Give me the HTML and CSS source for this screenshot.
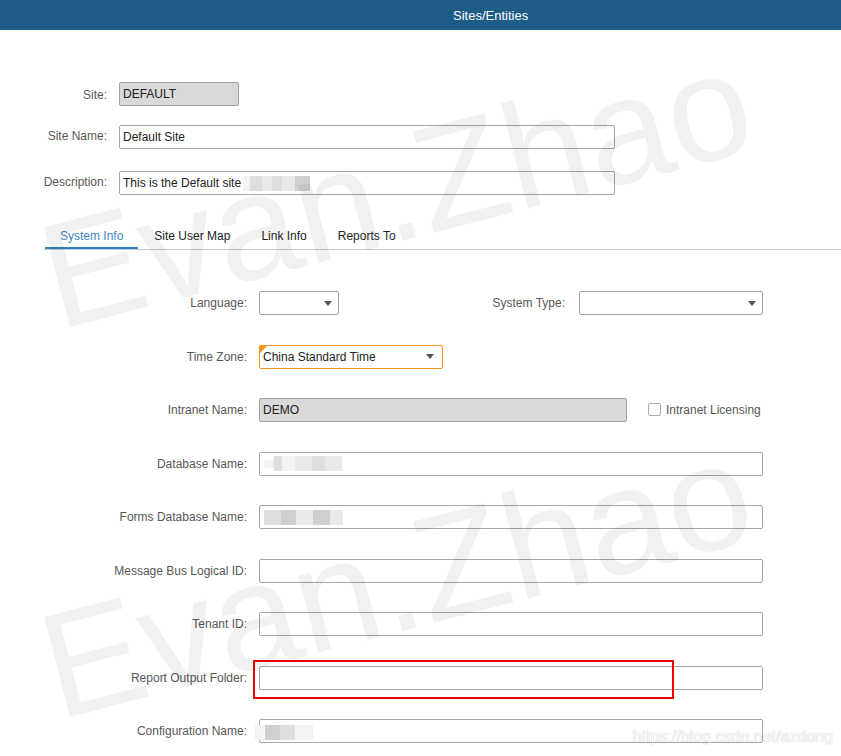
FILE: index.html
```html
<!DOCTYPE html>
<html>
<head>
<meta charset="utf-8">
<title>Sites/Entities</title>
<link rel="stylesheet" href="styles.css">
</head>
<body>
<header class="topbar"><span class="title">Sites/Entities</span></header>

<section class="site-form">
  <div class="row first">
    <span class="lbl">Site:</span>
    <div class="field ro w-site">DEFAULT</div>
  </div>
  <div class="row">
    <span class="lbl">Site Name:</span>
    <div class="field w-top">Default Site</div>
  </div>
  <div class="row desc">
    <span class="lbl">Description:</span>
    <div class="field w-top">This is the Default site
      <span class="blur blur-desc"><i class="px g4 w7"></i><i class="px g2 w12"></i><i class="px g3 w10"></i><i class="px g2 w10"></i><i class="px g3 w13"></i><i class="px g1 w15"></i></span>
    </div>
  </div>
</section>

<nav class="tabs">
  <span class="tab active">System Info</span>
  <span class="tab">Site User Map</span>
  <span class="tab">Link Info</span>
  <span class="tab">Reports To</span>
</nav>

<section class="sys-form">
  <div class="row">
    <span class="lbl">Language:</span>
    <div class="cell">
      <div class="field select w-lang"><span class="caret"></span></div>
      <span class="lbl lbl-inline">System Type:</span>
      <div class="field select w-systype"><span class="caret"></span></div>
    </div>
  </div>
  <div class="row">
    <span class="lbl">Time Zone:</span>
    <div class="cell">
      <div class="field select focus w-tz">China Standard Time<span class="caret"></span></div>
    </div>
  </div>
  <div class="row">
    <span class="lbl">Intranet Name:</span>
    <div class="cell">
      <div class="field ro w-intranet">DEMO</div>
      <span class="check"></span>
      <span class="check-lbl">Intranet Licensing</span>
    </div>
  </div>
  <div class="row">
    <span class="lbl">Database Name:</span>
    <div class="field w-full">
      <span class="blur"><i class="px g4 w10 half"></i><i class="px g2 w8"></i><i class="px g4 w13"></i><i class="px g3 w17"></i><i class="px g2 w13"></i><i class="px g3 w17"></i></span>
    </div>
  </div>
  <div class="row">
    <span class="lbl">Forms Database Name:</span>
    <div class="field w-full">
      <span class="blur"><i class="px g2 w17"></i><i class="px g1 w15"></i><i class="px g3 w17"></i><i class="px g1 w17"></i><i class="px g3 w13"></i></span>
    </div>
  </div>
  <div class="row">
    <span class="lbl">Message Bus Logical ID:</span>
    <div class="field w-full"></div>
  </div>
  <div class="row">
    <span class="lbl">Tenant ID:</span>
    <div class="field w-full"></div>
  </div>
  <div class="row">
    <span class="lbl">Report Output Folder:</span>
    <div class="field w-full annotated"><span class="annot"></span></div>
  </div>
  <div class="row">
    <span class="lbl">Configuration Name:</span>
    <div class="field w-full">
      <span class="blur blur-conf"><i class="px g4 w10"></i><i class="px g1 w15"></i><i class="px g2 w15"></i><i class="px g4 w18"></i></span>
    </div>
  </div>
</section>

<div class="wm wm-1">Evan.Zhao</div>
<div class="wm wm-2">Evan.Zhao</div>
<div class="blog">https://blog.csdn.net/azdong</div>
</body>
</html>
```

FILE: styles.css
```css
html, body {
  margin: 0;
  padding: 0;
}
body {
  font-family: "Liberation Sans", Arial, sans-serif;
  font-size: 12px;
  color: #222;
  background: #fff;
  width: 841px;
  height: 756px;
  overflow: hidden;
  position: relative;
}

.topbar {
  height: 30px;
  background: #1e5c88;
  color: #fff;
  display: flex;
  align-items: center;
  padding-left: 453px;
  font-size: 13px;
}

.row {
  display: flex;
  align-items: center;
  gap: 12px;
  height: 24px;
}
.lbl {
  color: #575757;
  text-align: right;
  flex: none;
}

.site-form {
  display: flex;
  flex-direction: column;
  gap: 19px;
  padding-top: 52px;
}
.site-form .lbl {
  width: 107px;
  margin-top: -2px;
}
.site-form .first .lbl {
  margin-top: 1px;
}
.site-form .desc {
  margin-top: 3px;
}

.field {
  box-sizing: border-box;
  height: 24px;
  border: 1px solid #a6a6a6;
  border-radius: 2px;
  padding: 0 3px;
  display: flex;
  align-items: center;
  background: #fff;
  color: #222;
  flex: none;
  position: relative;
  white-space: nowrap;
}
.field.ro {
  background: #d9d9d9;
  border-color: #a0a0a0;
}
.w-site { width: 120px; }
.w-top { width: 496px; }
.w-lang { width: 80px; }
.w-systype { width: 184px; }
.w-tz { width: 184px; }
.w-intranet { width: 368px; }
.w-full { width: 504px; }

.select .caret {
  margin-left: auto;
  margin-right: 3px;
  width: 0;
  height: 0;
  border-left: 4px solid transparent;
  border-right: 4px solid transparent;
  border-top: 5px solid #555;
}
.field.focus {
  border-color: #f7941e;
}
.field.focus .caret {
  margin-right: 5px;
}
.field.focus::before {
  content: "";
  position: absolute;
  left: 0;
  top: 0;
  border-top: 7px solid #f7941e;
  border-right: 7px solid transparent;
}

.tabs {
  display: flex;
  gap: 1px;
  margin: 28px 0 0 44px;
  padding-left: 1px;
  border-bottom: 1px solid #c8c8c8;
}
.tab {
  padding: 2px 15px 0;
  line-height: 22px;
  border-bottom: 2px solid transparent;
  color: #222;
}
.tab.active {
  color: #3a87c4;
  border-bottom-color: #2f80c0;
}

.sys-form {
  display: flex;
  flex-direction: column;
  gap: 29.5px;
  margin-top: 41px;
}
.sys-form > .row > .lbl {
  width: 247px;
}
.cell {
  display: flex;
  align-items: center;
  width: 504px;
}
.lbl-inline {
  flex: 1;
  margin-right: 14px;
}
.check {
  width: 13px;
  height: 13px;
  box-sizing: border-box;
  border: 1px solid #adadad;
  border-radius: 2px;
  margin-left: 21px;
  margin-top: -2px;
  background: #fff;
}
.check-lbl {
  margin-left: 5px;
  color: #575757;
  margin-top: -1px;
}

.blur {
  display: flex;
  align-items: center;
  margin-left: 1px;
}
.blur-desc {
  margin-left: 2px;
}
.blur-conf {
  margin-left: -8px;
  margin-top: 2px;
}
.px {
  display: block;
  height: 15px;
}
.px.half {
  height: 8px;
  align-self: center;
}
.g1 { background: #cfcfcf; }
.g2 { background: #dedede; }
.g3 { background: #e9e9e9; }
.g4 { background: #f3f3f3; }
.w7 { width: 7px; }
.w8 { width: 8px; }
.w10 { width: 10px; }
.w12 { width: 12px; }
.w13 { width: 13px; }
.w15 { width: 15px; }
.w17 { width: 17px; }
.w18 { width: 18px; }

.annot {
  position: absolute;
  left: -7px;
  top: -7px;
  width: 421px;
  height: 39px;
  box-sizing: border-box;
  border: 2px solid #ee0000;
}

.wm {
  position: absolute;
  left: 58px;
  font-family: "Liberation Sans", Arial, sans-serif;
  font-size: 150px;
  line-height: 150px;
  color: rgba(0, 0, 0, 0.055);
  white-space: nowrap;
  transform-origin: 0 127px;
  transform: rotate(-14.5deg);
  pointer-events: none;
}
.wm-1 { top: 203px; }
.wm-2 { top: 593px; }

.blog {
  position: absolute;
  right: 8px;
  top: 728px;
  font-size: 16px;
  color: rgba(255, 255, 255, 0.95);
  text-shadow: 0 0 1px rgba(0, 0, 0, 0.3);
  white-space: nowrap;
}
```
